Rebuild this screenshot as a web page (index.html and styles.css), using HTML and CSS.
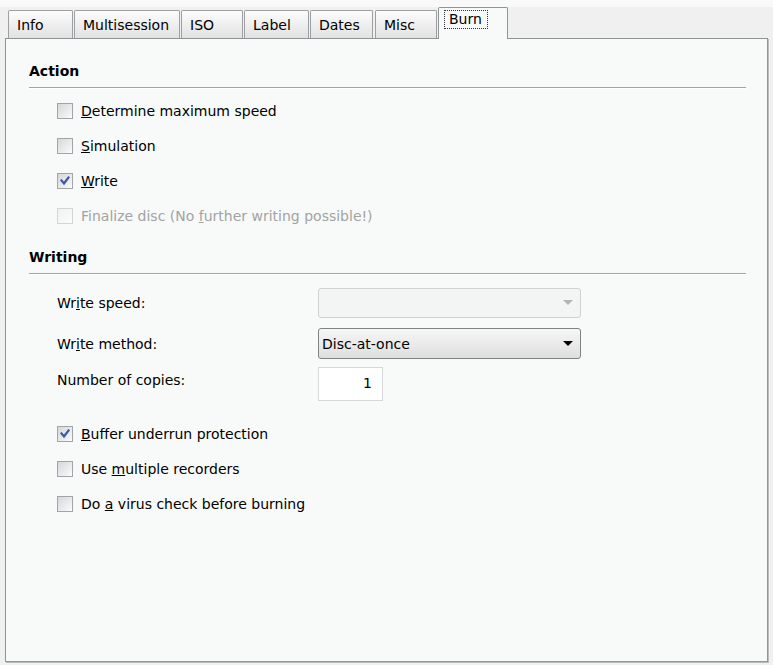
FILE: index.html
```html
<!DOCTYPE html>
<html>
<head>
<meta charset="utf-8">
<link rel="stylesheet" href="styles.css">
</head>
<body>
<div class="window">
  <div class="tabs">
    <div class="tab t-info">Info</div>
    <div class="tab t-multi">Multisession</div>
    <div class="tab t-iso">ISO</div>
    <div class="tab t-label">Label</div>
    <div class="tab t-dates">Dates</div>
    <div class="tab t-misc">Misc</div>
    <div class="tab active t-burn"><span class="focus">Burn</span></div>
  </div>
  <div class="panel">
    <div class="section">
      <div class="heading">Action</div>
      <div class="rule"></div>
      <div class="checks">
        <div class="check"><span class="box"></span><span class="lbl"><u>D</u>etermine maximum speed</span></div>
        <div class="check"><span class="box"></span><span class="lbl"><u>S</u>imulation</span></div>
        <div class="check"><span class="box checked"><svg viewBox="0 0 16 16" width="16" height="16"><path d="M4.5 7.5 L7 10.5 L11.5 4.5" fill="none" stroke="#3b57a8" stroke-width="2.2" stroke-linecap="square"/></svg></span><span class="lbl"><u>W</u>rite</span></div>
        <div class="check disabled"><span class="box"></span><span class="lbl">Finalize disc (No <u>f</u>urther writing possible!)</span></div>
      </div>
    </div>
    <div class="section writing">
      <div class="heading">Writing</div>
      <div class="rule"></div>
      <div class="form">
        <div class="flabel">Wr<u>i</u>te speed:</div>
        <div class="combo disabled"><span class="val"></span><svg class="arrow" viewBox="0 0 10 6" width="10" height="6"><path d="M0 0 H10 L5 5 Z" fill="#b4b4b4"/></svg></div>
        <div class="flabel">Wr<u>i</u>te method:</div>
        <div class="combo"><span class="val">Disc-at-once</span><svg class="arrow" viewBox="0 0 10 6" width="10" height="6"><path d="M0 0 H10 L5 5 Z" fill="#000"/></svg></div>
        <div class="flabel top">Number of copies:</div>
        <div class="numbox">1</div>
      </div>
      <div class="checks lower">
        <div class="check"><span class="box checked"><svg viewBox="0 0 16 16" width="16" height="16"><path d="M4.5 7.5 L7 10.5 L11.5 4.5" fill="none" stroke="#3b57a8" stroke-width="2.2" stroke-linecap="square"/></svg></span><span class="lbl"><u>B</u>uffer underrun protection</span></div>
        <div class="check"><span class="box"></span><span class="lbl">Use <u>m</u>ultiple recorders</span></div>
        <div class="check"><span class="box"></span><span class="lbl">Do <u>a</u> virus check before burning</span></div>
      </div>
    </div>
  </div>
</div>
</body>
</html>
```

FILE: styles.css
```css
html, body {
  margin: 0;
  padding: 0;
}
body {
  background: #f0f0f0;
  font-family: "DejaVu Sans", "Liberation Sans", sans-serif;
  font-size: 14px;
  color: #000;
  width: 773px;
  height: 665px;
  overflow: hidden;
}
.window {
  padding-top: 7px;
  background: linear-gradient(#f9f9f9 0, #f9f9f9 7px, #f0f0f0 7px);
  height: 658px;
}
.tabs {
  display: flex;
  align-items: flex-end;
  height: 31px;
  margin-left: 8px;
  position: relative;
  z-index: 2;
}
.tab {
  box-sizing: border-box;
  height: 28px;
  border: 1px solid #9ca0a3;
  border-bottom: none;
  border-radius: 2px 2px 0 0;
  background: linear-gradient(#fcfcfc, #ececec 60%, #e2e2e2);
  padding: 5px 0 0 8px;
  line-height: 18px;
  margin-right: 1px;
  white-space: nowrap;
}
.t-info { width: 65px; }
.t-multi { width: 106px; }
.t-iso { width: 62px; }
.t-label { width: 65px; }
.t-dates { width: 63px; margin-right: 2px; }
.t-misc { width: 62px; }
.tab.active {
  height: 32px;
  width: 70px;
  margin-bottom: -1px;
  background: #f7faf8;
  padding: 2px 0 0 5px;
  border-color: #8f9497;
}
.focus {
  display: inline-block;
  border: 1px dotted #333;
  padding: 0 5px 0 4px;
  line-height: 17px;
}
.panel {
  box-sizing: border-box;
  margin-left: 5px;
  width: 763px;
  height: 624px;
  background: #f7faf8;
  border: 1px solid #8f9497;
  box-shadow: 1px 1px 0 #b9bcbe;
  padding: 0 21px 0 23px;
}
.section {
  padding-top: 23px;
}
.section.writing {
  padding-top: 15px;
}
.heading {
  font-weight: bold;
  line-height: 18px;
  height: 18px;
}
.rule {
  height: 1px;
  background: #a0a4a6;
  border-bottom: 1px solid #ffffff;
  margin-top: 7px;
}
.checks {
  display: flex;
  flex-direction: column;
  padding-left: 28px;
  padding-top: 4px;
}
.check {
  display: flex;
  align-items: center;
  height: 35px;
}
.box {
  box-sizing: border-box;
  width: 16px;
  height: 16px;
  border: 1px solid #a2a5a8;
  background: linear-gradient(135deg, #d6d7da, #f2f3f4 80%, #ffffff);
  margin-right: 8px;
  display: inline-flex;
  flex: none;
}
.box svg {
  margin: -1px;
}
.check.disabled .box {
  border-color: #d3d5d6;
  background: linear-gradient(135deg, #f0f1f1, #fbfbfb);
}
.check.disabled .lbl {
  color: #a3a3a3;
}
.lbl {
  line-height: 18px;
  white-space: nowrap;
}
.form {
  display: grid;
  grid-template-columns: 261px 263px;
  grid-template-rows: 30px 31px 35px;
  row-gap: 10px;
  padding-left: 28px;
  margin-top: 13px;
  align-items: center;
}
.flabel {
  line-height: 18px;
}
.flabel.top {
  align-self: start;
  margin-top: 2px;
}
.combo {
  box-sizing: border-box;
  height: 100%;
  border: 1px solid #7f8183;
  border-radius: 3px;
  background: linear-gradient(#f6f6f6, #ebebeb 50%, #dedede);
  display: flex;
  align-items: center;
  justify-content: space-between;
  padding: 0 7px 0 3px;
}
.combo.disabled {
  border-color: #cfd1d2;
  background: #f3f4f4;
}
.numbox {
  box-sizing: border-box;
  width: 65px;
  height: 34px;
  border: 1px solid #d6d8d9;
  background: #ffffff;
  text-align: right;
  padding-right: 10px;
  line-height: 30px;
  align-self: start;
  margin-top: -2px;
}
.checks.lower {
  padding-top: 12px;
}
```
